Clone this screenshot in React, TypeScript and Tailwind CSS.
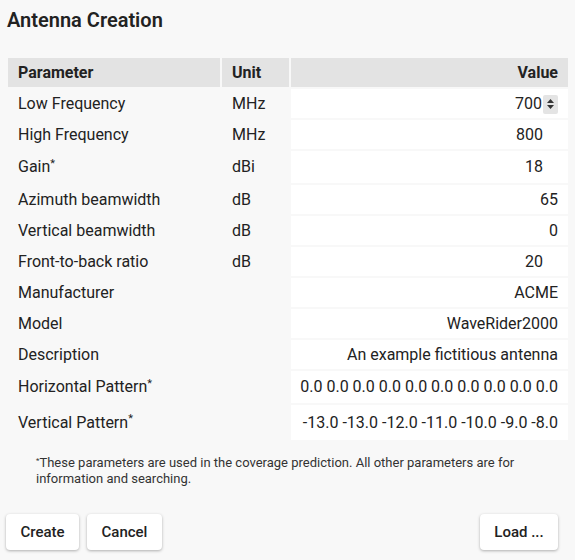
import React from 'react';

interface Row {
  name: string;
  unit: string;
  value: string;
  star?: boolean;
  input?: boolean;
  spinner?: boolean;
  height: string;
}

const rows: Row[] = [
  { name: 'Low Frequency', unit: 'MHz', value: '700', input: true, spinner: true, height: 'h-[29px]' },
  { name: 'High Frequency', unit: 'MHz', value: '800', input: true, height: 'h-[29px]' },
  { name: 'Gain', unit: 'dBi', value: '18', star: true, input: true, height: 'h-[32px]' },
  { name: 'Azimuth beamwidth', unit: 'dB', value: '65', height: 'h-[29px]' },
  { name: 'Vertical beamwidth', unit: 'dB', value: '0', height: 'h-[29px]' },
  { name: 'Front-to-back ratio', unit: 'dB', value: '20', input: true, height: 'h-[29px]' },
  { name: 'Manufacturer', unit: '', value: 'ACME', height: 'h-[29px]' },
  { name: 'Model', unit: '', value: 'WaveRider2000', height: 'h-[29px]' },
  { name: 'Description', unit: '', value: 'An example fictitious antenna', height: 'h-[29px]' },
  { name: 'Horizontal Pattern', unit: '', value: '0.0 0.0 0.0 0.0 0.0 0.0 0.0 0.0 0.0 0.0', star: true, height: 'h-[32px]' },
  { name: 'Vertical Pattern', unit: '', value: '-13.0 -13.0 -12.0 -11.0 -10.0 -9.0 -8.0', star: true, height: 'h-[35px]' },
];

const Spinner: React.FC = () => (
  <span className="ml-[1px] inline-flex h-[19px] w-[15px] flex-col items-center justify-center gap-[2px] rounded-[2px] bg-[#e4e4e4] align-middle">
    <svg width="7" height="4" viewBox="0 0 7 4">
      <path d="M3.5 0 L7 4 L0 4 Z" fill="#333" />
    </svg>
    <svg width="7" height="4" viewBox="0 0 7 4">
      <path d="M0 0 L7 0 L3.5 4 Z" fill="#333" />
    </svg>
  </span>
);

const Button: React.FC<{ label: string; width: string }> = ({ label, width }) => (
  <button
    className={`h-[36px] ${width} rounded-[4px] bg-white text-[15px] font-medium text-[#222] shadow-[0_1px_3px_rgba(0,0,0,0.3)]`}
  >
    {label}
  </button>
);

export default function App() {
  return (
    <div className="min-h-[560px] bg-[#f8f8f8] px-[6px] pt-[6px] font-['Roboto',sans-serif] text-[#222]">
      <h1 className="pl-[1px] text-[20px] leading-[28px] font-semibold text-[#222]">Antenna Creation</h1>

      <table className="mt-[22px] w-[564px] border-separate border-spacing-[2px] text-[16px]">
        <thead>
          <tr className="h-[29px] bg-[#e3e3e3] font-bold">
            <th className="w-[212px] bg-[#e3e3e3] pl-[10px] text-left font-bold">Parameter</th>
            <th className="w-[67px] bg-[#e3e3e3] pl-[10px] text-left font-bold">Unit</th>
            <th className="bg-[#e3e3e3] pr-[10px] text-right font-bold">Value</th>
          </tr>
        </thead>
        <tbody>
          {rows.map((row) => (
            <tr key={row.name} className={row.height}>
              <td className="pl-[10px] align-middle">
                {row.name}
                {row.star && <sup className="text-[11px]">*</sup>}
              </td>
              <td className="pl-[10px] align-middle">{row.unit}</td>
              <td
                className={`bg-white text-right align-middle whitespace-nowrap ${
                  row.spinner ? 'pr-[10px]' : row.input ? 'pr-[25px]' : 'pr-[10px]'
                }`}
              >
                {row.value}
                {row.spinner && <Spinner />}
              </td>
            </tr>
          ))}
        </tbody>
      </table>

      <p className="mt-[13px] pl-[30px] pr-[30px] text-[13px] leading-[16px] text-[#333]">
        <sup className="text-[8px]">*</sup>These parameters are used in the coverage prediction. All other parameters are for
        information and searching.
      </p>

      <div className="mt-[27px] flex items-center pr-[11px]">
        <Button label="Create" width="w-[73px]" />
        <div className="ml-[8px]">
          <Button label="Cancel" width="w-[75px]" />
        </div>
        <div className="ml-auto">
          <Button label="Load ..." width="w-[78px]" />
        </div>
      </div>
    </div>
  );
}
